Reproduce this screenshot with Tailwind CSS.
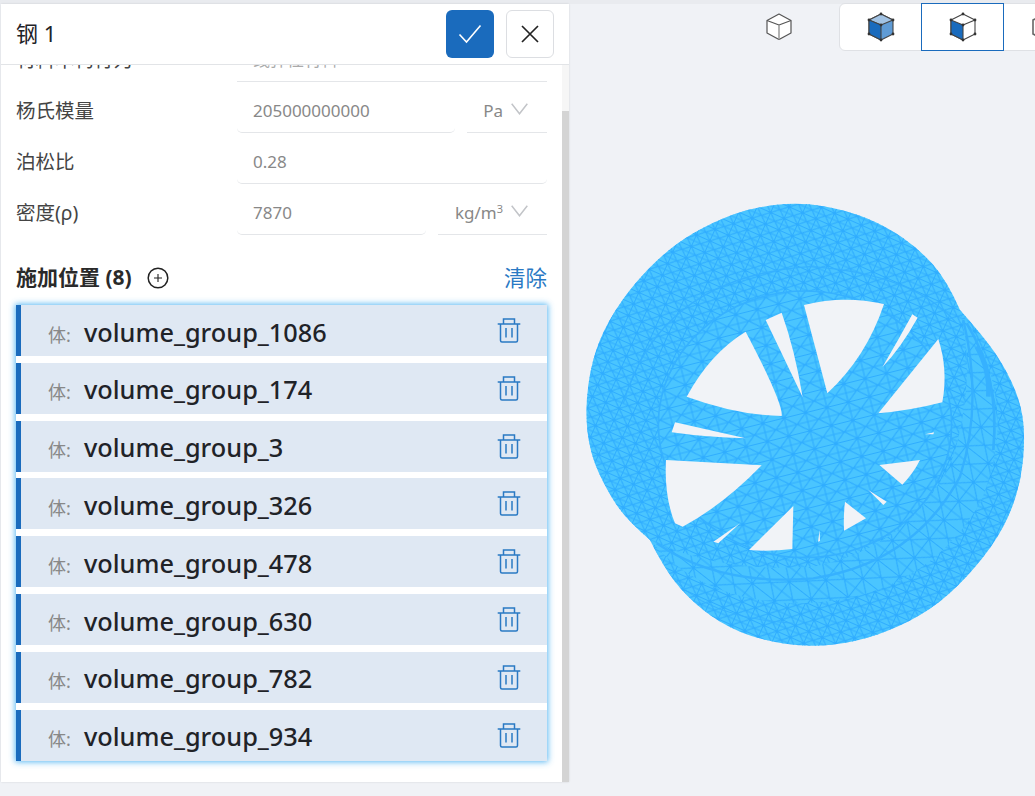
<!DOCTYPE html>
<html lang="zh">
<head>
<meta charset="utf-8">
<script src="https://cdn.jsdelivr.net/npm/@tailwindcss/browser@4"></script>
</head>
<body class="m-0">
<div class="relative w-[1035px] h-[796px] overflow-hidden bg-[#f0f2f6] font-['Noto_Sans','Noto_Sans_CJK_SC',sans-serif] text-[#1f2328]">
  <div class="h-[4px] bg-[#e9ebef]"></div>
  <div class="flex">
    <!-- panel -->
    <section class="ml-[1px] w-[568px] h-[778px] bg-white flex flex-col shadow-[0_0_2px_rgba(0,0,0,0.12)]">
      <header class="relative z-10 h-[61px] shrink-0 bg-white border-b border-[#e2e4e7] flex items-center pl-[15px] pr-[15px]">
        <h1 class="text-[22px] font-normal flex-1 -mt-[2px]">钢 1</h1>
        <button class="w-[48px] h-[48px] rounded-[6px] bg-[#1a6bbd] flex items-center justify-center">
          <svg width="24" height="20" viewBox="0 0 24 20" fill="none" stroke="#fff" stroke-width="1.6"><path d="M1.5 10.500l7 7.500L22.500 1.500"/></svg>
        </button>
        <button class="ml-[12px] w-[48px] h-[48px] rounded-[6px] border border-[#dcdee2] bg-white flex items-center justify-center">
          <svg width="18" height="18" viewBox="0 0 18 18" fill="none" stroke="#222" stroke-width="1.700"><path d="M1 1l16 16M17 1L1 17"/></svg>
        </button>
      </header>
      <div class="flex-1 flex min-h-0">
        <div class="flex-1 min-w-0 overflow-hidden px-[15px]">
          <div class="-mt-[34px]">
            <div class="h-[51px] pt-[7px] flex items-center">
              <span class="w-[221px] text-[19.5px] text-[#444]">材料本构行为</span>
              <div class="flex-1 h-full border-b border-[#e4e6e9] pl-[16px] flex items-center text-[17px] text-[#aaa]">线弹性材料</div>
            </div>
            <div class="h-[51px] pt-[7px] flex items-center">
              <span class="w-[221px] text-[19.5px] text-[#444]">杨氏模量</span>
              <div class="w-[218px] h-full border-b border-[#e4e6e9] rounded-b-[5px] pl-[16px] flex items-center text-[17px] text-[#888]">205000000000</div>
              <div class="ml-[12px] flex-1 h-full border-b border-[#e4e6e9] flex items-center justify-end pr-[19px] text-[17px] text-[#888]">Pa
                <svg class="ml-[8px] -mt-[3px]" width="17" height="12" viewBox="0 0 17 12" fill="none" stroke="#c2c4c8" stroke-width="1.500"><path d="M.7.700l7.800 10L16.300.700"/></svg>
              </div>
            </div>
            <div class="h-[51px] pt-[7px] flex items-center">
              <span class="w-[221px] text-[19.5px] text-[#444]">泊松比</span>
              <div class="flex-1 h-full border-b border-[#e4e6e9] rounded-b-[5px] pl-[16px] flex items-center text-[17px] text-[#888]">0.28</div>
            </div>
            <div class="h-[51px] pt-[7px] flex items-center">
              <span class="w-[221px] text-[19.5px] text-[#444]">密度(ρ)</span>
              <div class="w-[189px] h-full border-b border-[#e4e6e9] rounded-b-[5px] pl-[16px] flex items-center text-[17px] text-[#888]">7870</div>
              <div class="ml-[12px] flex-1 h-full border-b border-[#e4e6e9] flex items-center justify-end pr-[19px] text-[17px] text-[#888]"><span>kg/m<sup class="text-[11px]">3</sup></span>
                <svg class="ml-[8px] -mt-[3px]" width="17" height="12" viewBox="0 0 17 12" fill="none" stroke="#c2c4c8" stroke-width="1.500"><path d="M.7.700l7.800 10L16.300.700"/></svg>
              </div>
            </div>
            <div class="mt-[28px] h-[30px] flex items-center">
              <span class="text-[21px] font-bold text-[#2a2a2a]">施加位置 (8)</span>
              <svg class="ml-[15px]" width="22" height="22" viewBox="0 0 22 22" fill="none" stroke="#222" stroke-width="1.500"><circle cx="11" cy="11" r="9.800"/><path d="M11 7v8M7 11h8" stroke-width="1.100"/></svg>
              <span class="ml-auto text-[21.500px] text-[#2a79c4]">清除</span>
            </div>
            <ul class="mt-[12px] flex flex-col gap-[6.8px] bg-white shadow-[0_0_6px_1px_rgba(60,170,240,0.85)]">
              <li class="h-[51px] flex items-center bg-[#dfe8f3] border-l-[5px] border-[#1a6bbd] pl-[27px] pr-[26px]">
                <span class="text-[18px] text-[#888] mt-[9px] w-[36px]">体:</span><span class="text-[25.300px] font-medium flex-1 mt-[4px]">volume_group_1086</span>
                <svg width="24" height="25" viewBox="0 0 24 25" fill="none" stroke="#2a79c4" stroke-width="1.500"><path d="M.7 6h22.600M6.500 6V1h11v5M3.500 6v16.500q0 1.500 1.500 1.500h14q1.500 0 1.500-1.500V6M9 10v9.500M15 10v9.500"/></svg>
              </li>
              <li class="h-[51px] flex items-center bg-[#dfe8f3] border-l-[5px] border-[#1a6bbd] pl-[27px] pr-[26px]">
                <span class="text-[18px] text-[#888] mt-[9px] w-[36px]">体:</span><span class="text-[25.300px] font-medium flex-1 mt-[4px]">volume_group_174</span>
                <svg width="24" height="25" viewBox="0 0 24 25" fill="none" stroke="#2a79c4" stroke-width="1.500"><path d="M.7 6h22.600M6.500 6V1h11v5M3.500 6v16.500q0 1.500 1.500 1.500h14q1.500 0 1.500-1.500V6M9 10v9.500M15 10v9.500"/></svg>
              </li>
              <li class="h-[51px] flex items-center bg-[#dfe8f3] border-l-[5px] border-[#1a6bbd] pl-[27px] pr-[26px]">
                <span class="text-[18px] text-[#888] mt-[9px] w-[36px]">体:</span><span class="text-[25.300px] font-medium flex-1 mt-[4px]">volume_group_3</span>
                <svg width="24" height="25" viewBox="0 0 24 25" fill="none" stroke="#2a79c4" stroke-width="1.500"><path d="M.7 6h22.600M6.500 6V1h11v5M3.500 6v16.500q0 1.500 1.500 1.500h14q1.500 0 1.500-1.500V6M9 10v9.500M15 10v9.500"/></svg>
              </li>
              <li class="h-[51px] flex items-center bg-[#dfe8f3] border-l-[5px] border-[#1a6bbd] pl-[27px] pr-[26px]">
                <span class="text-[18px] text-[#888] mt-[9px] w-[36px]">体:</span><span class="text-[25.300px] font-medium flex-1 mt-[4px]">volume_group_326</span>
                <svg width="24" height="25" viewBox="0 0 24 25" fill="none" stroke="#2a79c4" stroke-width="1.500"><path d="M.7 6h22.600M6.500 6V1h11v5M3.500 6v16.500q0 1.500 1.500 1.500h14q1.500 0 1.500-1.500V6M9 10v9.500M15 10v9.500"/></svg>
              </li>
              <li class="h-[51px] flex items-center bg-[#dfe8f3] border-l-[5px] border-[#1a6bbd] pl-[27px] pr-[26px]">
                <span class="text-[18px] text-[#888] mt-[9px] w-[36px]">体:</span><span class="text-[25.300px] font-medium flex-1 mt-[4px]">volume_group_478</span>
                <svg width="24" height="25" viewBox="0 0 24 25" fill="none" stroke="#2a79c4" stroke-width="1.500"><path d="M.7 6h22.600M6.500 6V1h11v5M3.500 6v16.500q0 1.500 1.500 1.500h14q1.500 0 1.500-1.500V6M9 10v9.500M15 10v9.500"/></svg>
              </li>
              <li class="h-[51px] flex items-center bg-[#dfe8f3] border-l-[5px] border-[#1a6bbd] pl-[27px] pr-[26px]">
                <span class="text-[18px] text-[#888] mt-[9px] w-[36px]">体:</span><span class="text-[25.300px] font-medium flex-1 mt-[4px]">volume_group_630</span>
                <svg width="24" height="25" viewBox="0 0 24 25" fill="none" stroke="#2a79c4" stroke-width="1.500"><path d="M.7 6h22.600M6.500 6V1h11v5M3.500 6v16.500q0 1.500 1.500 1.500h14q1.500 0 1.500-1.500V6M9 10v9.500M15 10v9.500"/></svg>
              </li>
              <li class="h-[51px] flex items-center bg-[#dfe8f3] border-l-[5px] border-[#1a6bbd] pl-[27px] pr-[26px]">
                <span class="text-[18px] text-[#888] mt-[9px] w-[36px]">体:</span><span class="text-[25.300px] font-medium flex-1 mt-[4px]">volume_group_782</span>
                <svg width="24" height="25" viewBox="0 0 24 25" fill="none" stroke="#2a79c4" stroke-width="1.500"><path d="M.7 6h22.600M6.500 6V1h11v5M3.500 6v16.500q0 1.500 1.500 1.500h14q1.500 0 1.500-1.500V6M9 10v9.500M15 10v9.500"/></svg>
              </li>
              <li class="h-[51px] flex items-center bg-[#dfe8f3] border-l-[5px] border-[#1a6bbd] pl-[27px] pr-[26px]">
                <span class="text-[18px] text-[#888] mt-[9px] w-[36px]">体:</span><span class="text-[25.300px] font-medium flex-1 mt-[4px]">volume_group_934</span>
                <svg width="24" height="25" viewBox="0 0 24 25" fill="none" stroke="#2a79c4" stroke-width="1.500"><path d="M.7 6h22.600M6.500 6V1h11v5M3.500 6v16.500q0 1.500 1.500 1.500h14q1.500 0 1.500-1.500V6M9 10v9.500M15 10v9.500"/></svg>
              </li>
            </ul>
          </div>
        </div>
        <div class="w-[7px] bg-[#f6f6f6] pt-[46px]"><div class="h-full bg-[#d4d4d4]"></div></div>
      </div>
    </section>
  </div>

  <!-- free-standing cube icon -->
  <svg class="absolute left-[766px] top-[13px]" width="26" height="27" viewBox="0 0 26 27" fill="#fff" stroke="#555" stroke-width="1.200" stroke-linejoin="round"><path d="M13 1l12 6.500v12.500l-12 6.500L1 20V7.500z"/><path d="M1 7.500l12 4.500 12-4.500" fill="none"/><path d="M13 12v14.500" fill="none" stroke="#999" stroke-width="1.500"/></svg>

  <!-- view toolbar -->
  <div class="absolute left-[839px] top-[3px] h-[48px] w-[240px] bg-white border border-[#dfe1e5] rounded-[6px] flex">
    <div class="w-[81px] flex items-center justify-center">
      <svg width="28" height="30" viewBox="-1 -1 28 30" stroke="#444" stroke-width="1.100" stroke-linejoin="round"><path d="M13 1l12 6v14l-12 6-12-6V7z" fill="#5f9bd5"/><path d="M13 1l12 6-12 5-12-5z" fill="#a2c3e4"/><path d="M1 7l12 5v15L1 21z" fill="#1a6bbd"/><g fill="#333" stroke="none"><circle cx="13" cy="1" r="1.400"/><circle cx="25" cy="7" r="1.400"/><circle cx="25" cy="21" r="1.400"/><circle cx="13" cy="27" r="1.400"/><circle cx="1" cy="21" r="1.400"/><circle cx="1" cy="7" r="1.400"/><circle cx="13" cy="12" r="1.400"/></g></svg>
    </div>
    <div class="w-[83px] -my-[1px] border border-[#1a6bbd] flex items-center justify-center">
      <svg width="28" height="30" viewBox="-1 -1 28 30" stroke="#444" stroke-width="1.100" stroke-linejoin="round"><path d="M13 1l12 6v14l-12 6-12-6V7z" fill="#fff"/><path d="M13 12l12-5" fill="none"/><path d="M1 7l12 5v15L1 21z" fill="#1a6bbd"/><g fill="#333" stroke="none"><circle cx="13" cy="1" r="1.400"/><circle cx="25" cy="7" r="1.400"/><circle cx="25" cy="21" r="1.400"/><circle cx="13" cy="27" r="1.400"/><circle cx="1" cy="21" r="1.400"/><circle cx="1" cy="7" r="1.400"/><circle cx="13" cy="12" r="1.400"/></g></svg>
    </div>
    <div class="pl-[28px] flex items-center">
      <svg width="26" height="28" viewBox="0 0 26 28" stroke="#666" stroke-width="1.600" fill="#fff"><path d="M13 1l12 6v14l-12 6-12-6V7z"/></svg>
    </div>
  </div>

  <!-- wheel mesh on the free canvas -->
  <svg class="absolute left-[580px] top-[190px]" width="455" height="470" viewBox="0 0 1365 1410">
    <defs>
      <pattern id="meshA" width="44" height="38" patternUnits="userSpaceOnUse" patternTransform="rotate(24)">
        <path d="M0 0h44M0 19h44M0 38h44M0 0l22 19L44 0M0 38l22-19 22 19M22 0v38" fill="none" stroke="#2fadff" stroke-width="3"/>
      </pattern>
      <pattern id="meshB" width="66" height="56" patternUnits="userSpaceOnUse" patternTransform="rotate(-14)">
        <path d="M0 0h66M0 28h66M0 56h66M0 0l33 28L66 0M0 56l33-28 33 28M33 0v56" fill="none" stroke="#2fadff" stroke-width="3.500"/>
      </pattern>
      <pattern id="meshC" width="84" height="72" patternUnits="userSpaceOnUse" patternTransform="rotate(38)">
        <path d="M0 0h84M0 36h84M0 72h84M0 0l42 36L84 0M0 72l42-36 42 36M42 0v72" fill="none" stroke="#2fadff" stroke-width="3.500"/>
      </pattern>
      <path id="sil" d="M1140 360Q1220 450 1252.500 500Q1285 550 1305 600Q1325 650 1330 700Q1335 750 1328.500 815Q1322 880 1298.500 945Q1275 1010 1232.500 1070Q1190 1130 1135 1185Q1080 1240 1020 1275Q960 1310 895 1332.500Q830 1355 760 1363.500Q690 1372 615 1361Q540 1350 480 1325Q420 1300 370 1260Q320 1220 285 1175Q250 1130 210 1050Q140 990 110 945Q80 900 55 845Q30 790 22.500 725Q15 660 25 585Q35 510 60 450Q85 390 127.500 330Q170 270 225 217.500Q280 165 340 130Q400 95 460 73.500Q520 52 590 44.500Q660 37 730 48.500Q800 60 860 85Q920 110 970 145Q1020 180 1060 225Q1100 270 1140 360Z"/>
      <clipPath id="silclip"><use href="#sil"/></clipPath>
    </defs>
    <use href="#sil" fill="#4ac5ff"/>
    <g clip-path="url(#silclip)" fill="none" stroke="#36b1ff">
      <rect width="1365" height="1410" fill="url(#meshA)" stroke="none"/>
      <path d="M1140 360Q1330 640 1200 940Q1020 1240 640 1240Q360 1230 210 1050Q420 1150 700 1130Q1000 1070 1120 800Q1190 560 1140 360Z" fill="#4ac5ff" stroke="none"/>
      <path d="M1140 360Q1330 640 1200 940Q1020 1240 640 1240Q360 1230 210 1050Q420 1150 700 1130Q1000 1070 1120 800Q1190 560 1140 360Z" fill="url(#meshC)" stroke="none"/>
      <ellipse cx="675" cy="703" rx="440" ry="400" fill="#4ac5ff" stroke="none"/>
      <ellipse cx="675" cy="703" rx="440" ry="400" fill="url(#meshB)" stroke-width="5"/>
      <path d="M130 640Q240 260 690 230Q1000 250 1130 400" stroke-width="4"/>
      <path d="M230 1060Q420 1190 700 1165Q1000 1120 1140 860Q1210 640 1150 390" stroke-width="7"/>
      <path d="M1160 400Q1260 560 1240 780" stroke-width="8"/>
      <path d="M1190 470Q1230 540 1225 620" stroke-width="14"/>
      <path d="M220 1070Q300 1280 640 1300" stroke-width="3"/>
    </g>
    <g fill="#f1f3f7">
      <path d="M497 425Q390 490 320 620Q470 675 605 678Q610 640 497 425Z"/>
      <path d="M557 390L605 368Q645 480 668 622Q610 500 557 390Z"/>
      <path d="M672 345Q790 315 912 342Q860 500 742 610Z"/>
      <path d="M997 373L1013 383Q965 470 907 532Q955 450 997 373Z"/>
      <path d="M1075 447Q1105 540 1087 637Q990 662 895 670Z"/>
      <path d="M285 697L497 745Q380 742 275 727Z"/>
      <path d="M1035 733L1062 727L1060 733Z"/>
      <path d="M258 810L545 826Q430 945 308 1010L285 1000Q252 920 258 810Z"/>
      <path d="M898 825L1020 810Q1000 850 967 884Z"/>
      <path d="M865 900L920 935L910 945Z"/>
      <path d="M795 935L858 985L792 1022Q790 975 795 935Z"/>
      <path d="M719 1020L720 1053L714 1055Z"/>
      <path d="M640 948L637 1077Q570 1085 507 1080Z"/>
      <path d="M480 1000L415 1060L400 1055Z"/>
    </g>
  </svg>
</div>
</body>
</html>
